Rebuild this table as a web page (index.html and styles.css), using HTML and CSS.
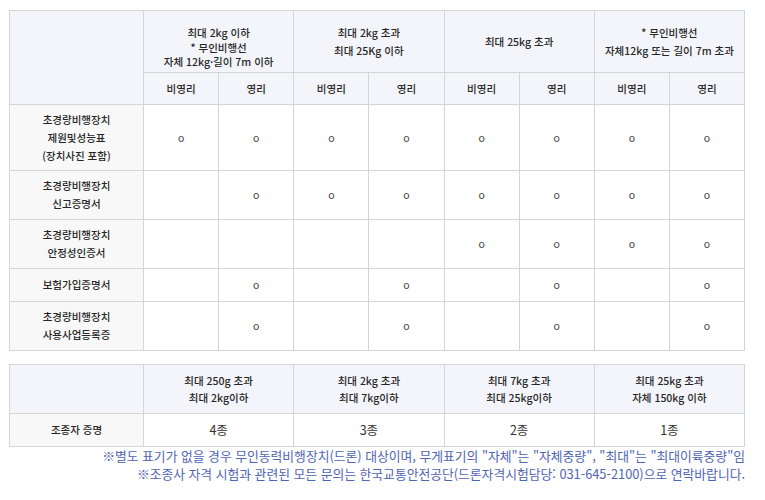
FILE: index.html
```html
<!DOCTYPE html>
<html lang="ko">
<head>
<meta charset="utf-8">
<link rel="stylesheet" href="styles.css">
</head>
<body>
<div class="wrap">
  <table class="grid main">
    <colgroup>
      <col class="c-label">
      <col><col><col><col><col><col><col><col>
    </colgroup>
    <thead>
      <tr class="h1">
        <th rowspan="2" class="corner"></th>
        <th colspan="2" class="first-head"><span class="l1">최대 2kg 이하</span><span class="l2">* 무인비행선<br>자체 12kg·길이 7m 이하</span></th>
        <th colspan="2">최대 2kg 초과<br>최대 25Kg 이하</th>
        <th colspan="2">최대 25kg 초과</th>
        <th colspan="2">* 무인비행선<br>자체12kg 또는 길이 7m 초과</th>
      </tr>
      <tr class="h2">
        <th>비영리</th><th>영리</th><th>비영리</th><th>영리</th><th>비영리</th><th>영리</th><th>비영리</th><th>영리</th>
      </tr>
    </thead>
    <tbody>
      <tr class="r3">
        <th>초경량비행장치<br>제원및성능표<br>(장치사진 포함)</th>
        <td>o</td><td>o</td><td>o</td><td>o</td><td>o</td><td>o</td><td>o</td><td>o</td>
      </tr>
      <tr class="r2">
        <th>초경량비행장치<br>신고증명서</th>
        <td></td><td>o</td><td>o</td><td>o</td><td>o</td><td>o</td><td>o</td><td>o</td>
      </tr>
      <tr class="r2">
        <th>초경량비행장치<br>안정성인증서</th>
        <td></td><td></td><td></td><td></td><td>o</td><td>o</td><td>o</td><td>o</td>
      </tr>
      <tr class="r1">
        <th>보험가입증명서</th>
        <td></td><td>o</td><td></td><td>o</td><td></td><td>o</td><td></td><td>o</td>
      </tr>
      <tr class="r2">
        <th>초경량비행장치<br>사용사업등록증</th>
        <td></td><td>o</td><td></td><td>o</td><td></td><td>o</td><td></td><td>o</td>
      </tr>
    </tbody>
  </table>

  <table class="grid sub">
    <colgroup>
      <col class="c-label">
      <col><col><col><col>
    </colgroup>
    <thead>
      <tr class="r2">
        <th class="corner"></th>
        <th>최대 250g 초과<br>최대 2kg이하</th>
        <th>최대 2kg 초과<br>최대 7kg이하</th>
        <th>최대 7kg 초과<br>최대 25kg이하</th>
        <th>최대 25kg 초과<br>자체 150kg 이하</th>
      </tr>
    </thead>
    <tbody>
      <tr class="r1">
        <th>조종자 증명</th>
        <td class="num">4종</td><td class="num">3종</td><td class="num">2종</td><td class="num">1종</td>
      </tr>
    </tbody>
  </table>

  <div class="notes">
    <p>※별도 표기가 없을 경우 무인동력비행장치(드론) 대상이며, 무게표기의 "자체"는 "자체중량", "최대"는 "최대이륙중량"임</p>
    <p>※조종사 자격 시험과 관련된 모든 문의는 한국교통안전공단(드론자격시험담당: 031-645-2100)으로 연락바랍니다.</p>
  </div>
</div>
</body>
</html>
```

FILE: styles.css
```css
html, body {
  margin: 0;
  padding: 0;
  background: #ffffff;
}

body {
  font-family: "Noto Sans CJK KR", "Noto Sans", sans-serif;
  color: #333333;
}

.wrap {
  width: 736px;
  padding: 10px 0 0 9px;
}

.grid {
  width: 736px;
  border-collapse: collapse;
  table-layout: fixed;
  font-size: 10.5px;
  line-height: 18px;
}

.c-label {
  width: 134px;
}

.grid th,
.grid td {
  border: 1px solid #d5d5d8;
  padding: 0 4px;
  text-align: center;
  vertical-align: middle;
  font-weight: 400;
}

.grid th {
  color: #262626;
  font-weight: 500;
}

.grid thead th {
  background: #f4f5fa;
}

.grid tbody th {
  background: #f8f8f8;
}

.grid td {
  background: #ffffff;
  color: #444444;
}

.h1 { height: 62px; }
.h2 { height: 32px; }
.r3 { height: 66px; }
.r2 { height: 49px; }
.r1 { height: 33px; }

.first-head {
  padding-top: 9px !important;
}

.first-head .l1 {
  display: block;
  line-height: 17px;
}

.first-head .l2 {
  display: block;
  line-height: 13.5px;
}

.sub {
  margin-top: 13px;
}

.sub thead tr {
  height: 49px;
}

.sub thead th {
  line-height: 17px;
}

.num {
  font-size: 12.5px;
  color: #333333 !important;
}

.notes {
  text-align: right;
  color: #4f64b4;
  font-size: 12.8px;
  line-height: 17.5px;
}

.notes p {
  margin: 0;
}
```
